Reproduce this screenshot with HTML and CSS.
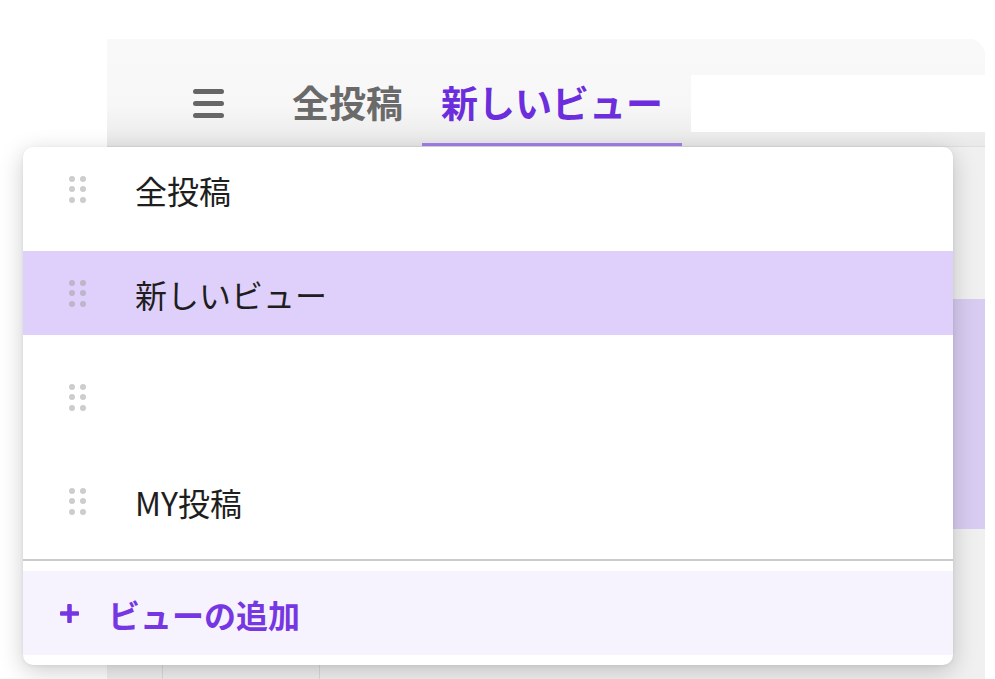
FILE: index.html
```html
<!DOCTYPE html>
<html lang="ja">
<head>
<meta charset="utf-8">
<title>ビュー</title>
<link rel="stylesheet" href="styles.css">
</head>
<body>
<div class="stage">
  <div class="app">
    <header class="app-header">
      <span class="hamburger" aria-label="menu">
        <svg width="31" height="31" viewBox="0 0 31 31"><rect x="0" y="1" width="31" height="5" rx="2.5"/><rect x="0" y="13" width="31" height="5" rx="2.5"/><rect x="0" y="25" width="31" height="5" rx="2.5"/></svg>
      </span>
      <div class="tab">全投稿</div>
      <div class="tab active">新しいビュー</div>
      <div class="search"></div>
    </header>
    <div class="board">
      <div class="band"></div>
      <div class="cols">
        <div class="col"></div>
        <div class="col"></div>
        <div class="col"></div>
      </div>
    </div>
  </div>

  <div class="menu">
    <ul class="menu-list">
      <li class="menu-item"><span class="handle"><i></i><i></i><i></i><i></i><i></i><i></i></span><span class="label">全投稿</span></li>
      <li class="menu-item selected"><span class="handle"><i></i><i></i><i></i><i></i><i></i><i></i></span><span class="label">新しいビュー</span></li>
      <li class="menu-item"><span class="handle"><i></i><i></i><i></i><i></i><i></i><i></i></span><span class="label"></span></li>
      <li class="menu-item"><span class="handle"><i></i><i></i><i></i><i></i><i></i><i></i></span><span class="label">MY投稿</span></li>
    </ul>
    <div class="menu-sep"></div>
    <div class="menu-footer">
      <svg class="plus" width="19" height="19" viewBox="0 0 19 19"><rect x="7.2" y="0" width="4.6" height="19" rx="1"/><rect x="0" y="7.2" width="19" height="4.6" rx="1"/></svg>
      <span class="add-label">ビューの追加</span>
    </div>
  </div>
</div>
</body>
</html>
```

FILE: styles.css
```css
* { box-sizing: border-box; }

html, body {
  margin: 0;
  padding: 0;
  background: #ffffff;
}

body {
  font-family: "Noto Sans CJK JP", "Noto Sans", sans-serif;
  color: #1e1e1e;
}

.stage {
  position: relative;
  width: 995px;
  height: 679px;
  padding: 39px 10px 0 107px;
  overflow: hidden;
  display: flex;
  flex-direction: column;
}

.app {
  flex: 1;
  display: flex;
  flex-direction: column;
  border-top-right-radius: 16px;
  overflow: hidden;
  background: #f8f8f8;
}

.app-header {
  height: 108px;
  display: flex;
  align-items: stretch;
  padding: 22px 0 0 86px;
  background: linear-gradient(#f9f9f9 0%, #f7f7f7 62%, #e9e9e9 100%);
  border-bottom: 1px solid #dedede;
}

.hamburger {
  align-self: center;
  display: flex;
  width: 31px;
  height: 31px;
  margin-right: 49px;
  fill: #666666;
}

.tab {
  display: flex;
  align-items: center;
  padding: 0 19px;
  font-size: 37px;
  font-weight: 700;
  color: #6a6a6a;
  border-bottom: 3px solid transparent;
  line-height: 1;
}

.tab.active {
  color: #6c2ddc;
  border-bottom-color: #a47fe8;
}

.search {
  align-self: center;
  flex: 1;
  height: 57px;
  margin-left: 9px;
  background: #ffffff;
}

.board {
  flex: 1;
  display: flex;
  flex-direction: column;
  background: #f0f0f0;
}

.band {
  margin-top: 152px;
  height: 230px;
  background: #d9ccf2;
}

.cols {
  flex: 1;
  display: grid;
  grid-template-columns: 55px 157px 1fr;
}

.col {
  border-left: 1px solid #dcdcdc;
}

.col:first-child {
  border-left: none;
}

/* dropdown menu */
.menu {
  position: absolute;
  top: 147px;
  left: 23px;
  width: 930px;
  background: #ffffff;
  border-radius: 10px;
  box-shadow: 0 6px 24px rgba(0, 0, 0, 0.2), 0 1px 4px rgba(0, 0, 0, 0.06);
  padding-bottom: 10px;
  overflow: hidden;
}

.menu-list {
  list-style: none;
  margin: 0;
  padding: 0 0 16px 0;
  display: flex;
  flex-direction: column;
  gap: 20px;
}

.menu-item {
  height: 84px;
  display: flex;
  align-items: center;
  padding-left: 45px;
}

.menu-item.selected {
  background: #dfd0fb;
}

.handle {
  width: 18px;
  display: grid;
  grid-template-columns: 6px 6px;
  grid-auto-rows: 6px;
  column-gap: 5px;
  row-gap: 4.5px;
  margin-left: 1px;
  margin-right: 48px;
}

.handle i {
  display: block;
  width: 6px;
  height: 6px;
  border-radius: 50%;
  background: #cdcdcd;
}

.menu-item.selected .handle i {
  background: #bdb5ca;
}

.label {
  font-size: 32px;
  line-height: 1;
  color: #1e1e1e;
  padding-top: 2px;
}

.menu-sep {
  height: 2px;
  background: #cbcbcb;
  margin-bottom: 10px;
}

.menu-footer {
  height: 84px;
  display: flex;
  align-items: center;
  padding-left: 37px;
  background: #f6f2fe;
  color: #7637e2;
}

.plus {
  fill: #7637e2;
  margin-right: 29px;
}

.add-label {
  font-size: 32px;
  font-weight: 700;
  line-height: 1;
  padding-top: 2px;
}
```
